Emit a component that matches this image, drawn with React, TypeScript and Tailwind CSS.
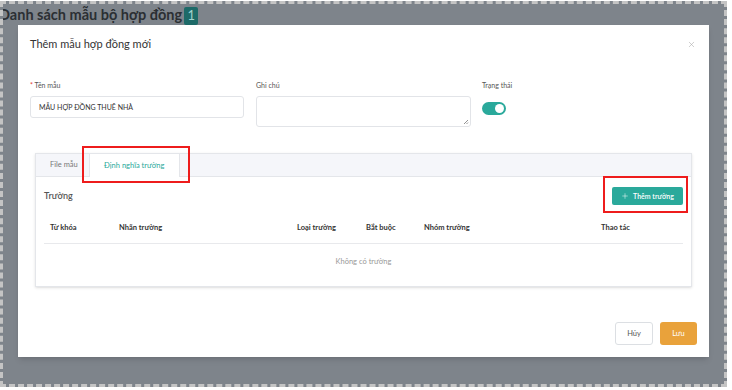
import { X, Plus } from "lucide-react";

const font = { fontFamily: "Lato, 'Noto Sans', sans-serif" };

const headers = [
  { label: "Từ khóa", w: "w-[69px]" },
  { label: "Nhãn trường", w: "w-[178px]" },
  { label: "Loại trường", w: "w-[69px]" },
  { label: "Bắt buộc", w: "w-[58px]" },
  { label: "Nhóm trường", w: "w-[177px]" },
  { label: "Thao tác", w: "flex-1" },
];

const App = () => {
  return (
    <div className="w-[732px] h-[390px] bg-white overflow-hidden" style={font}>
      <div className="w-[727px] h-[386px] mt-px border-[3px] border-dashed border-[#c4c4c4] bg-[#7e848b] flex flex-col overflow-hidden">
        {/* page title behind overlay */}
        <div className="h-[21px] flex items-center -ml-[4px] shrink-0">
          <span className="text-[14.5px] font-bold text-[#2b2f33] leading-none mt-[1px]">Danh sách mẫu bộ hợp đồng</span>
          <span className="ml-[2px] w-[14px] h-[18px] bg-[#1d6a68] text-[#9fd3cf] text-[13px] flex items-center justify-center rounded-[2px] mt-[2px]">1</span>
        </div>

        {/* modal */}
        <div className="ml-[15px] w-[691px] h-[332px] bg-white shadow-md flex flex-col">
          <div className="h-[36px] flex items-center justify-between pl-[12px] pr-[13px] pt-[2px]">
            <span className="text-[11px] text-[#333]">Thêm mẫu hợp đồng mới</span>
            <X className="w-[9px] h-[9px] text-[#aaa]" strokeWidth={1.5} />
          </div>

          <div className="flex px-[12px] mt-[21px]">
            <div className="w-[214px]">
              <div className="text-[7px] text-[#555] mb-[7px] leading-none">
                <span className="text-[#e53935]">* </span>Tên mẫu
              </div>
              <div className="h-[22px] border border-[#e2e4e8] rounded-[3px] flex items-center px-[8px] text-[7px] text-[#333]">
                MẪU HỢP ĐỒNG THUÊ NHÀ
              </div>
            </div>
            <div className="w-[215px] ml-[12px]">
              <div className="text-[7px] text-[#555] mb-[7px] leading-none">Ghi chú</div>
              <div className="h-[31px] border border-[#e2e4e8] rounded-[3px] relative">
                <svg className="absolute right-[1px] bottom-[1px]" width="6" height="6" viewBox="0 0 6 6">
                  <path d="M5 1 L1 5 M5 3.5 L3.5 5" stroke="#777" strokeWidth="0.8" />
                </svg>
              </div>
            </div>
            <div className="ml-[11px]">
              <div className="text-[7px] text-[#555] mb-[13px] leading-none">Trạng thái</div>
              <div className="w-[24px] h-[13px] rounded-full bg-[#2aa99b] flex items-center justify-end pr-[2px]">
                <div className="w-[9px] h-[9px] rounded-full bg-white" />
              </div>
            </div>
          </div>

          {/* tab card */}
          <div className="mx-[17px] mt-[26px] h-[134px] border border-[#e4e6ea] shadow-sm flex flex-col">
            <div className="h-[23px] bg-[#f5f6fa] border-b border-[#e4e6ea] flex items-end pl-[12px] shrink-0">
              <div className="h-full flex items-center px-[2px] text-[7.5px] text-[#777]">File mẫu</div>
              <div className="relative ml-[9px] h-[23px] w-[91px] bg-white border-x border-[#e4e6ea] flex items-center justify-center text-[7.5px] text-[#2aa99b] -mb-px">
                Định nghĩa trường
                <div className="absolute -left-[8px] -right-[11px] -top-[8px] -bottom-[6px] border-2 border-[#ee1c1c]" />
              </div>
            </div>
            <div className="px-[8px] flex flex-col">
              <div className="flex items-center justify-between h-[35px] pt-[3px]">
                <span className="text-[9px] font-semibold text-[#555]">Trường</span>
                <div className="relative">
                  <div className="absolute -left-[9px] -right-[5px] -top-[11px] -bottom-[8px] border-2 border-[#ee1c1c]" />
                  <div className="h-[18px] w-[71px] bg-[#2aa99b] rounded-[2px] flex items-center justify-center gap-[4px] text-white text-[7px] font-semibold">
                    <Plus className="w-[8px] h-[8px]" strokeWidth={1.5} />
                    Thêm trường
                  </div>
                </div>
              </div>
              <div className="flex items-center h-[31px] border-b border-[#e8e9ec] pl-[6px] mt-[1px]">
                {headers.map((h) => (
                  <div key={h.label} className={`${h.w} text-[7.5px] font-bold text-[#333]`}>
                    {h.label}
                  </div>
                ))}
              </div>
              <div className="h-[36px] flex items-center justify-center text-[7.5px] text-[#999]">Không có trường</div>
            </div>
          </div>

          <div className="flex justify-end gap-[7px] pr-[12px] mt-[35px]">
            <div className="w-[38px] h-[23px] border border-[#dcdfe3] rounded-[3px] flex items-center justify-center text-[7.5px] text-[#555]">Hủy</div>
            <div className="w-[37px] h-[23px] bg-[#e9a23b] rounded-[3px] flex items-center justify-center text-[7.5px] text-white">Lưu</div>
          </div>
        </div>
      </div>
    </div>
  );
};

export default App;
